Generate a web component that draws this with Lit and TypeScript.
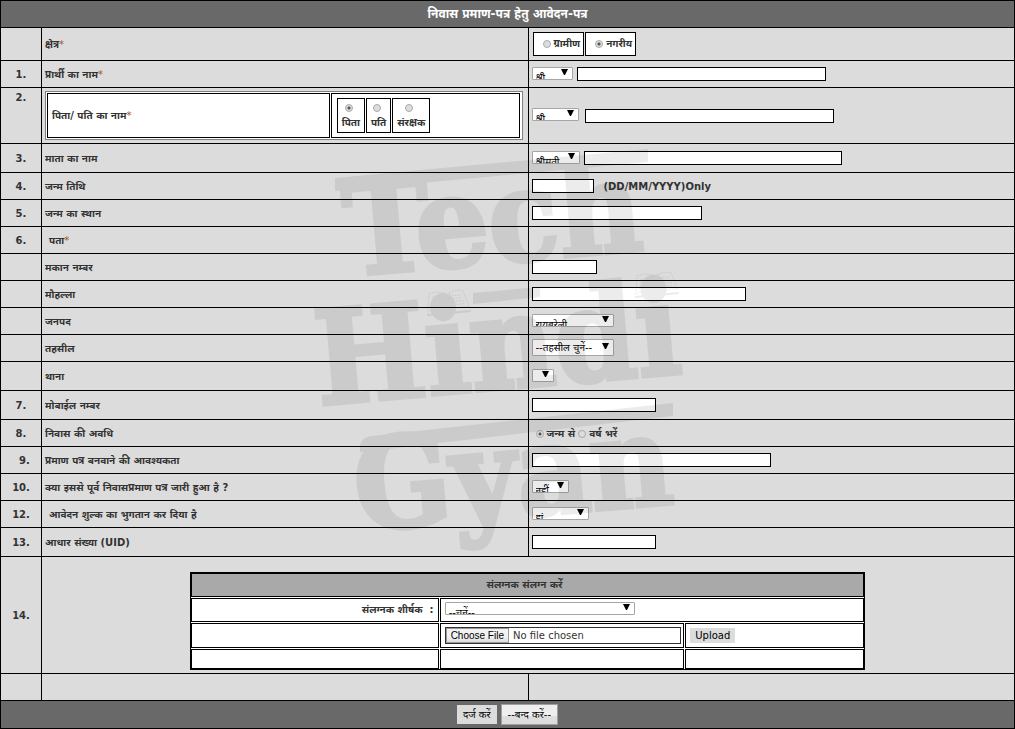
import { LitElement, html, css, svg, nothing, TemplateResult } from "lit";
import { customElement, property } from "lit/decorators.js";

type Size = "s41" | "s47" | "s48" | "s82" | "s22" | "s37" | "s57" | "s190";

@customElement("drop-down")
class DropDown extends LitElement {
  @property() value = "";
  @property() label = "";
  @property() size: Size = "s41";
  @property({ type: Boolean }) tall = false;

  static styles = css`
    :host { display: inline-flex; margin-bottom: 3px; }
    .wrap { position: relative; display: flex; }
    select {
      appearance: none; box-sizing: border-box; height: 13px; margin: 0;
      padding: 3px 0 0 3px; border: 1px solid #a6a6a6; border-radius: 1px;
      background: #fff; color: #000; overflow: hidden;
      font: 10px/14px "DejaVu Sans", "Noto Sans", sans-serif;
    }
    .tall { height: 17px; padding-top: 1px; }
    .arrow { position: absolute; right: 5px; top: 2px; width: 7px; height: 6px; pointer-events: none; }
    .tall + .arrow { top: 4px; }
    .s41 { width: 41px; } .s47 { width: 47px; } .s48 { width: 48px; } .s82 { width: 82px; }
    .s22 { width: 22px; } .s37 { width: 37px; } .s57 { width: 57px; } .s190 { width: 190px; }
  `;

  render() {
    return html`<span class="wrap">
      <select class="${this.size} ${this.tall ? "tall" : ""}" aria-label=${this.label}>
        <option>${this.value}</option>
      </select>
      <svg class="arrow" viewBox="0 0 7 6"><path d="M0 0h7L4 6H3z" /></svg>
    </span>`;
  }
}

interface Row {
  no?: string;
  id?: string;
  label?: string;
  required?: boolean;
  indent?: boolean;
  tall?: boolean;
  control?: TemplateResult;
}

const box = (id: string, width: string) => html`<input class="box ${width}" id=${id} type="text" />`;
const pick = (size: Size, value: string, label: string, tall = false) =>
  html`<drop-down .size=${size} .value=${value} .label=${label} .tall=${tall}></drop-down>`;

@customElement("app-root")
class AppRoot extends LitElement {
  static styles = css`
    :host { display: block; }
    * { box-sizing: border-box; }
    .form {
      position: relative; display: grid; gap: 1px; padding: 1px; margin: 0; background: #000; color: #333;
      font: 10px/14px "DejaVu Sans", "Noto Sans", sans-serif;
    }
    .row { display: grid; grid-template-columns: 40px minmax(0, 1fr) minmax(0, 1fr); gap: 1px; min-height: 26px; }
    .row.tall { min-height: 28px; }
    .row.area { min-height: 32px; }
    .row.guardian { min-height: 55px; }
    .cell { display: flex; align-items: center; padding: 1px 3px 0; background: #dcdcdc; }
    .no { justify-content: center; font-weight: bold; }
    .no.top { align-items: flex-start; padding-top: 3px; }
    .indent { padding-left: 7px; }
    .bold { font-weight: bold; }
    .req { color: #a0522d; font-weight: normal; }
    .bar {
      display: flex; align-items: center; justify-content: center; gap: 4px;
      min-height: 26px; background: #696969;
    }
    .bar.actions { min-height: 27px; }
    h1 { margin: 0; color: #fff; font-size: 12px; line-height: 16px; }
    .box { height: 14px; margin: 0 0 1px; padding: 0 2px; border: 1px solid #000; border-radius: 0; background: #fff; font: inherit; }
    .w62 { width: 62px; } .w65 { width: 65px; } .w124 { width: 124px; } .w170 { width: 170px; }
    .w214 { width: 214px; } .w239 { width: 239px; } .w249 { width: 249px; } .w258 { width: 258px; }
    .gap4 { gap: 4px; } .gap6 { gap: 6px; } .gap10 { gap: 10px; }
    input[type="radio"] {
      appearance: none; width: 8px; height: 8px; margin: 0; border: 1px solid #aaa; border-radius: 50%;
      background: #ddd;
    }
    input[type="radio"]:checked { background: radial-gradient(circle, #555 0 1px, #ddd 2px); }
    .choices { display: flex; gap: 1px; padding: 0 1px; font-weight: bold; }
    .choice { display: flex; align-items: center; gap: 3px; border: 1px solid #000; background: #fff; }
    .areas { padding-bottom: 1px; }
    .areas .choice { height: 24px; padding: 0 3px 0 9px; }
    .parent .choice { flex-direction: column; gap: 4px; height: 35px; padding: 5px 4px 0; }
    .parent .choice input { margin-right: 4px; }
    .inline { display: flex; align-items: center; gap: 3px; padding-left: 4px; font-weight: bold; }
    .parent {
      flex: 1; display: grid; grid-template-columns: 283fr 190fr; gap: 1px; height: 49px;
      padding: 1px; margin: 0 2px 1px 0; border: 1px solid #808080; background: #fff;
    }
    .parent > div { display: flex; align-items: center; padding: 0 4px; border: 1px solid #000; }
    .attach-row { display: grid; grid-template-columns: 40px minmax(0, 1fr); gap: 1px; }
    .attach-cell { justify-content: center; padding: 15px 4px 3px 3px; }
    .attach {
      display: grid; grid-template-columns: 248fr 245fr 179fr; gap: 1px; width: 100%; max-width: 675px;
      border: 1px solid #000; background: #fff;
    }
    .attach > div { display: flex; align-items: center; min-height: 24px; padding: 0 4px; border: 1px solid #000; }
    .attach .head { grid-column: 1 / -1; justify-content: center; padding-right: 10px; background: #a9a9a9; font-weight: bold; }
    .attach .wide { grid-column: 2 / -1; }
    .attach .right { justify-content: flex-end; }
    .attach .mid { min-height: 25px; padding-right: 2px; }
    .attach .low { min-height: 20px; }
    .file {
      width: 100%; height: 17px; border: 1px solid #333; background: #fff; color: #333;
      font: 10px/15px "DejaVu Sans", sans-serif;
    }
    .file::file-selector-button {
      height: 15px; margin: 0 4px 0 0; padding: 0 4px; border: 1px solid #999; border-radius: 0;
      background: linear-gradient(#f2f2f2 60%, #ddd); color: #000; font: 10px/13px "Liberation Sans", sans-serif;
    }
    button { margin: 0; border: 0; background: #dcdcdc; color: #000; font: inherit; }
    .upload { height: 15px; padding: 0 5px; }
    .submit { height: 19px; padding: 0 6px; }
    .close { height: 21px; padding: 0 6px; border: 1px solid #a0a0a0; background: linear-gradient(#eee 60%, #ddd 60%); }
    .mark {
      position: absolute; left: 50%; top: 140px; width: 400px; height: 430px; margin-left: -208px;
      overflow: visible; opacity: 0.07; pointer-events: none;
    }
    .mark text {
      font-family: "DejaVu Serif Condensed", "DejaVu Serif", serif; font-weight: bold;
      stroke: #000; stroke-width: 4px; stroke-linejoin: miter;
    }
    .mark .page { fill: none; stroke: #000; stroke-width: 1; stroke-dasharray: 2 1; }
  `;

  private rows: Row[] = [
    { no: "3.", id: "mother", label: "माता का नाम", tall: true,
      control: html`<div class="cell gap4">${pick("s48", "श्रीमती", "माता संबोधन")}${box("mother", "w258")}</div>` },
    { no: "4.", id: "dob", label: "जन्म तिथि",
      control: html`<div class="cell gap10">${box("dob", "w62")}<b>(DD/MM/YYYY)Only</b></div>` },
    { no: "5.", id: "place", label: "जन्म का स्थान", control: html`<div class="cell">${box("place", "w170")}</div>` },
    { no: "6.", label: "पता", required: true, indent: true },
    { id: "house", label: "मकान नम्बर", control: html`<div class="cell">${box("house", "w65")}</div>` },
    { id: "locality", label: "मौहल्ला", control: html`<div class="cell">${box("locality", "w214")}</div>` },
    { label: "जनपद", control: html`<div class="cell">${pick("s82", "रायबरेली", "जनपद")}</div>` },
    { label: "तहसील", control: html`<div class="cell">${pick("s82", "--तहसील चुनें--", "तहसील", true)}</div>` },
    { label: "थाना", tall: true, control: html`<div class="cell">${pick("s22", "", "थाना")}</div>` },
    { no: "7.", id: "mobile", label: "मोबाईल नम्बर", tall: true, control: html`<div class="cell">${box("mobile", "w124")}</div>` },
    { no: "8.", label: "निवास की अवधि",
      control: html`<div class="cell"><div class="inline">
        <input type="radio" name="period" id="birth" checked /><label for="birth">जन्म से</label>
        <input type="radio" name="period" id="years" /><label for="years">वर्ष भरें</label></div></div>` },
    { no: "\u00a0\u00a09.", id: "need", label: "प्रमाण पत्र बनवाने की आवश्यकता", control: html`<div class="cell">${box("need", "w239")}</div>` },
    { no: "10.", label: "क्या इससे पूर्व निवासप्रमाण पत्र जारी हुआ है ?",
      control: html`<div class="cell">${pick("s37", "नहीं", "पूर्व प्रमाण पत्र")}</div>` },
    { no: "12.", label: "आवेदन शुल्क का भुगतान कर दिया है", indent: true,
      control: html`<div class="cell">${pick("s57", "हां", "आवेदन शुल्क")}</div>` },
    { no: "13.", id: "uid", label: "आधार संख्या (UID)", tall: true, control: html`<div class="cell">${box("uid", "w124")}</div>` },
  ];

  private row(r: Row) {
    const text = html`${r.label}${r.required ? html`<span class="req">*</span>` : nothing}`;
    return html`<div class="row ${r.tall ? "tall" : ""}">
      <div class="cell no">${r.no}</div>
      <div class="cell bold ${r.indent ? "indent" : ""}">${r.id ? html`<label for=${r.id}>${text}</label>` : html`<span>${text}</span>`}</div>
      ${r.control ?? html`<div class="cell"></div>`}
    </div>`;
  }

  private watermark() {
    const book = (x: number, y: number) => svg`<g transform="translate(${x} ${y}) rotate(-5)">
      <path class="page" d="M4 2Q12 0 20 3L19 20Q10 17 1 20zM24 3Q31 0 38 2L43 19Q33 17 24 20z" />
      <path class="page" d="M7 6h10M6 9h11M6 12h10M5 15h11M26 6h10M27 9h10M27 12h11M27 15h12" />
      <path d="M0 22H44V24H0z" />
    </g>`;
    return html`<svg class="mark" viewBox="0 0 400 430" aria-hidden="true">
      <path d="M35 38L348 9V22L35 51z" />
      <path d="M173 153L240 147V157L173 164z" />
      <path d="M60 312Q58 298 72 296L373 263V276L62 312z" />
      <text font-size="128" transform="translate(48 136) rotate(-5)">Tech</text>
      <text font-size="130" transform="translate(19 265) rotate(-5)">Hindi</text>
      <text font-size="126" transform="translate(58 391) rotate(-5)">Gyan</text>
      ${book(125, 152)}${book(333, 134)}
    </svg>`;
  }

  render() {
    return html`<form class="form">
      <div class="bar"><h1>निवास प्रमाण-पत्र हेतु आवेदन-पत्र</h1></div>
      <div class="row area">
        <div class="cell"></div>
        <div class="cell bold"><span>क्षेत्र<span class="req">*</span></span></div>
        <div class="cell"><div class="choices areas">
          <div class="choice"><input type="radio" name="area" id="rural" /><label for="rural">ग्रामीण</label></div>
          <div class="choice"><input type="radio" name="area" id="urban" checked /><label for="urban">नगरीय</label></div>
        </div></div>
      </div>
      ${this.row({ no: "1.", id: "applicant", label: "प्रार्थी का नाम", required: true,
        control: html`<div class="cell gap4">${pick("s41", "श्री", "प्रार्थी संबोधन")}${box("applicant", "w249")}</div>` })}
      <div class="row guardian">
        <div class="cell no top">2.</div>
        <div class="cell"><div class="parent">
          <div class="bold"><label for="guardian">पिता/ पति का नाम<span class="req">*</span></label></div>
          <div><div class="choices">
            <div class="choice"><input type="radio" name="rel" id="father" checked /><label for="father">पिता</label></div>
            <div class="choice"><input type="radio" name="rel" id="husband" /><label for="husband">पति</label></div>
            <div class="choice"><input type="radio" name="rel" id="keeper" /><label for="keeper">संरक्षक</label></div>
          </div></div>
        </div></div>
        <div class="cell gap6">${pick("s47", "श्री", "पिता संबोधन")}${box("guardian", "w249")}</div>
      </div>
      ${this.rows.map((r) => this.row(r))}
      <div class="attach-row">
        <div class="cell no">14.</div>
        <div class="cell attach-cell"><div class="attach">
          <div class="head">संलग्नक संलग्न करें</div>
          <div class="right bold">संलग्नक शीर्षक &nbsp;:</div>
          <div class="wide">${pick("s190", "--चुनें--", "संलग्नक शीर्षक")}</div>
          <div class="mid"></div>
          <div class="mid"><input class="file" type="file" aria-label="संलग्नक" /></div>
          <div class="mid"><button class="upload" type="button">Upload</button></div>
          <div class="low"></div><div class="low"></div><div class="low"></div>
        </div></div>
      </div>
      ${this.row({})}
      <div class="bar actions">
        <button class="submit" type="button">दर्ज करें</button>
        <button class="close" type="button">--बन्द करें--</button>
      </div>
      ${this.watermark()}
    </form>`;
  }
}
